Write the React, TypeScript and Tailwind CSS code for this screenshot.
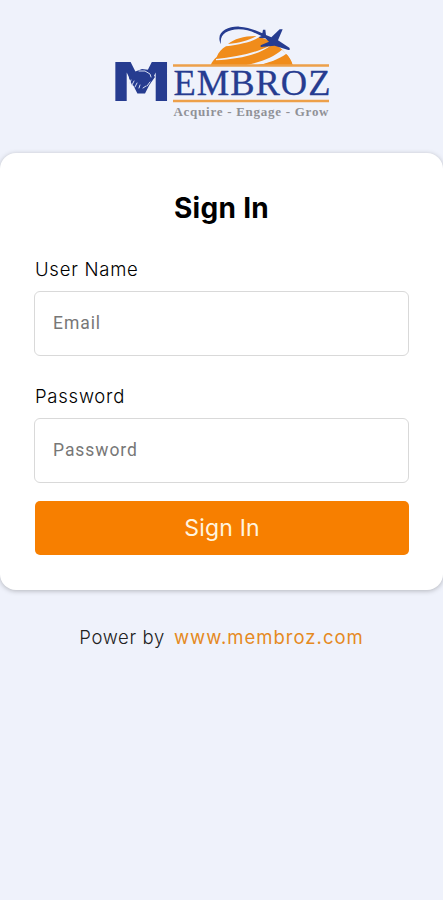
const fieldClass =
  'h-[65px] w-full rounded-md border border-[#d9d9d9] bg-white px-[18px] pb-px font-[Roboto,sans-serif] text-[17.5px] tracking-[0.95px] text-[#555] outline-none placeholder:text-[#777]'

const labelClass = 'h-[35px] pl-px text-[18.5px] leading-[26px] font-light tracking-[0.75px]'

function Logo() {
  return (
    <svg width="222" height="104" viewBox="110 20 222 104" role="img" aria-label="Membroz">
      {/* sun */}
      <g transform="translate(205 15) scale(0.33333)" fill="#f08c1b">
        <path d="M66 87 C84 72 112 63 151 63 C130 76 100 84 66 87Z" />
        <path d="M14 150 C18 140 24 133 32 126 C38 112 47 101 60 94 C105 88 140 80 160 66 L188 76 C208 86 226 99 237 113 C247 123 256 136 260 150Z" />
        <path d="M30 132 C90 126 150 114 196 90 C160 120 95 133 30 136Z" fill="#eff2fb" />
        <path d="M108 152 C160 144 200 128 228 104 L241 116 C220 132 185 145 148 152Z" fill="#eff2fb" />
        <path d="M150 151 C188 146 220 137 242 118 C251 128 257 139 260 151Z" />
      </g>
      {/* plane and its trail */}
      <g transform="translate(205 15) scale(0.33333)" fill="#263c90">
        <path d="M45 88 C26 52 66 33 100 35 C128 37 150 45 178 59 L174 67 C146 52 124 43 98 43 C62 44 40 58 45 88Z" />
        <path d="M164 53 L169 55 L171 44 L178 44 L180 60 L196 67 L221 43 L230 43 L216 76 L250 98 C253 103 251 106 247 105 L206 92 L164 96 L164 91 L189 80 L178 70 L160 69 L160 65 L170 62Z" />
      </g>
      <path d="M172 65.5H328M172 101H328" stroke="#eda04a" strokeWidth="2.4" />
      <text transform="translate(108.6 101) scale(1.18 1)" fontFamily="DejaVu Sans" fontWeight="700" fontSize="54" fill="#263c90">
        M
      </text>
      {/* handshake */}
      <path d="M127 69 L133 72 L141 69 L149 70 L154 77 L149 84 L141 88 L131 85 L128 78Z" fill="#263c90" />
      <g stroke="#d5dcf1" fill="none" strokeWidth="1" strokeLinecap="round">
        <path d="M138 71 L144 71 L149 74 L150 77" />
        <path d="M130 80 L129 83 M133 81 L131 85 M136 83 L134 87 M139 85 L138 88 M142 88 L145 86 M146 86 L149 82" />
      </g>
      <text x="172.5" y="95" textLength="157" fontFamily="Liberation Serif" fontSize="36.5" fill="#263c90" stroke="#263c90" strokeWidth="0.3">
        EMBROZ
      </text>
      <text x="172.5" y="116" textLength="155" fontFamily="Liberation Serif" fontWeight="700" fontSize="13" fill="#909197">
        Acquire - Engage - Grow
      </text>
    </svg>
  )
}

export default function App() {
  return (
    <main className="flex min-h-screen flex-col items-center bg-[#eff2fb] font-[Inter,sans-serif] text-black">
      <header className="flex h-[153px] w-full justify-center pt-5">
        <Logo />
      </header>

      <form
        className="flex h-[437px] w-full flex-col rounded-[16px] bg-white px-[34px] pt-9 shadow-[0_1px_5px_rgba(0,0,0,0.25)]"
        onSubmit={(e) => e.preventDefault()}
      >
        <h1 className="text-center text-[28px] leading-[39px] font-bold tracking-[0.3px]">Sign In</h1>
        <label htmlFor="username" className={`mt-[28px] ${labelClass}`}>
          User Name
        </label>
        <input id="username" placeholder="Email" className={fieldClass} />
        <label htmlFor="password" className={`mt-[27px] ${labelClass}`}>
          Password
        </label>
        <input id="password" type="password" placeholder="Password" className={fieldClass} />
        <button className="mt-[18px] ml-px h-[54px] rounded-[5px] bg-[#f77f00] text-[23px] tracking-[0.2px] text-[#fff4df]">
          Sign In
        </button>
      </form>

      <footer className="mt-[33px] flex gap-[9px] text-[18.5px] leading-7">
        <span className="font-light tracking-[0.65px] text-[#222]">Power by</span>
        <a href="#" className="tracking-[1px] text-[#e58a1f]">
          www.membroz.com
        </a>
      </footer>
    </main>
  )
}
